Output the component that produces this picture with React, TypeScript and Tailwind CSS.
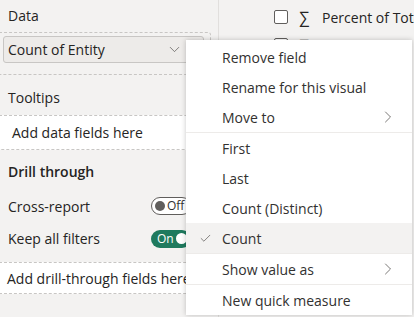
import { Check, ChevronDown, ChevronRight } from "lucide-react";

const font = "font-['Open_Sans',sans-serif]";

function Toggle({ on }: { on: boolean }) {
  if (on) {
    return (
      <div className="flex h-[18px] w-[40px] shrink-0 items-center justify-between rounded-full bg-[#1f7a5e] pl-[6px] pr-[4px]">
        <span className="text-[12px] leading-none text-white">On</span>
        <span className="h-[11px] w-[11px] rounded-full bg-white" />
      </div>
    );
  }
  return (
    <div className="flex h-[18px] w-[40px] shrink-0 items-center gap-[2px] rounded-full border border-[#605e5c] bg-white pl-[3px]">
      <span className="h-[10px] w-[10px] rounded-full bg-[#605e5c]" />
      <span className="text-[12px] leading-none text-[#323130]">Off</span>
    </div>
  );
}

function MenuItem({ label, checked, sub, active }: { label: string; checked?: boolean; sub?: boolean; active?: boolean }) {
  return (
    <div className={`flex h-[30px] items-center pr-[14px] ${active ? "bg-[#f3f2f1]" : ""}`}>
      <div className="flex w-[36px] shrink-0 justify-center pl-[2px]">
        {checked && <Check size={13} strokeWidth={1.4} className="text-[#605e5c]" />}
      </div>
      <span className="flex-1 text-[14px] text-[#323130]">{label}</span>
      {sub && <ChevronRight size={20} strokeWidth={1} className="text-[#605e5c]" />}
    </div>
  );
}

const Sep = () => <div className="h-px bg-[#edebe9]" />;

export default function App() {
  return (
    <div className={`relative flex h-[317px] w-[414px] overflow-hidden bg-[#f3f2f1] text-[#252423] ${font}`}>
      <div className="flex w-[219px] shrink-0 flex-col border-r border-[#e1dfdd] pr-[7px]">
        <div className="flex h-[32px] items-center pl-[8px] pb-[2px] text-[14px]">Data</div>

        <div className="-ml-px rounded-r-[3px] border border-dashed border-[#c8c6c4] pt-[3px] pb-[11px] pl-[3px] pr-[6px]">
          <div className="flex h-[27px] items-center justify-between rounded-[3px] border border-[#c8c6c4] bg-[#edebe9] pl-[4px] pr-[20px]">
            <span className="text-[14px]">Count of Entity</span>
            <ChevronDown size={17} strokeWidth={1.1} className="text-[#605e5c]" />
          </div>
        </div>

        <div className="h-[40px] pt-[12px] pl-[8px] text-[14px]">Tooltips</div>

        <div className="-ml-px flex h-[35px] items-center rounded-r-[3px] border border-dashed border-[#c8c6c4] bg-white pl-[12px] text-[14px]">
          Add data fields here
        </div>

        <div className="h-[40px] pt-[11px] pl-[8px] text-[14px] font-semibold">Drill through</div>

        <div className="flex h-[32px] items-center justify-between pl-[8px] pr-[20px] text-[14px]">
          <span>Cross-report</span>
          <Toggle on={false} />
        </div>
        <div className="flex h-[33px] items-center justify-between pl-[8px] pr-[20px] text-[14px]">
          <span>Keep all filters</span>
          <Toggle on={true} />
        </div>

        <div className="-ml-px mt-[7px] flex h-[32px] items-center whitespace-nowrap border-y border-dashed border-[#c8c6c4] bg-white pl-[8px] text-[14px]">
          Add drill-through fields here
        </div>
      </div>

      <div className="flex-1 overflow-hidden pl-[55px] pt-[8px]">
        <div className="flex h-[18px] items-center whitespace-nowrap">
          <span className="h-[14px] w-[14px] shrink-0 rounded-[2px] border border-[#605e5c] bg-white" />
          <span className="ml-[11px] text-[16px] leading-none">∑</span>
          <span className="ml-[13px] text-[14px]">Percent of Total</span>
        </div>
        <div className="mt-[11px] flex items-center">
          <span className="h-[14px] w-[14px] shrink-0 rounded-[2px] border border-[#605e5c] bg-white" />
          <span className="ml-[11px] text-[16px] leading-none">∑</span>
        </div>
      </div>

      <div className="absolute left-[186px] top-[40px] w-[226px] bg-white pt-[2px] shadow-[0_0_5px_rgba(0,0,0,0.22)]">
        <MenuItem label="Remove field" />
        <MenuItem label="Rename for this visual" />
        <MenuItem label="Move to" sub />
        <Sep />
        <MenuItem label="First" />
        <MenuItem label="Last" />
        <MenuItem label="Count (Distinct)" />
        <MenuItem label="Count" checked active />
        <Sep />
        <MenuItem label="Show value as" sub />
        <Sep />
        <MenuItem label="New quick measure" />
      </div>
    </div>
  );
}
